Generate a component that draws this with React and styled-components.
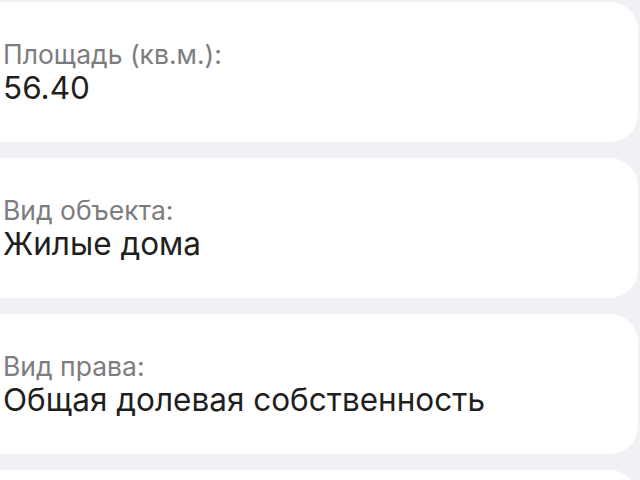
import React from 'react';
import {styled, createGlobalStyle} from 'styled-components';

const GlobalStyle = createGlobalStyle`
  html, body {
    margin: 0;
    padding: 0;
    background: #f0f1f5;
    overflow: hidden;
  }
`

const ListStyled = styled.div`
  display: flex;
  flex-direction: column;
  gap: 16px;
  padding-top: 2px;
  width: 640px;
  height: 480px;
  overflow: hidden;
  font-family: "Inter", "Noto Sans", sans-serif;
`

const CardStyled = styled.div`
  flex: 0 0 auto;
  height: 140px;
  box-sizing: border-box;
  margin-left: -30px;
  width: 668px;
  background: #ffffff;
  border-radius: 28px;
  padding: 36px 0 0 33px;
  display: flex;
  flex-direction: column;
`

const LabelStyled = styled.div`
  font-size: 26.5px;
  line-height: 32px;
  color: #7d7d7f;
`

const ValueStyled = styled.div`
  font-size: 31.5px;
  line-height: 36px;
  color: #1f1f21;
`

const fields = [
    {label: 'Площадь (кв.м.):', value: '56.40'},
    {label: 'Вид объекта:', value: 'Жилые дома'},
    {label: 'Вид права:', value: 'Общая долевая собственность'},
    {label: '', value: ''},
]

export default function App() {
    return (
        <>
            <GlobalStyle/>
            <ListStyled>
                {fields.map((field, i) => (
                    <CardStyled key={i}>
                        {field.label && <LabelStyled>{field.label}</LabelStyled>}
                        {field.value && <ValueStyled>{field.value}</ValueStyled>}
                    </CardStyled>
                ))}
            </ListStyled>
        </>
    )
}
